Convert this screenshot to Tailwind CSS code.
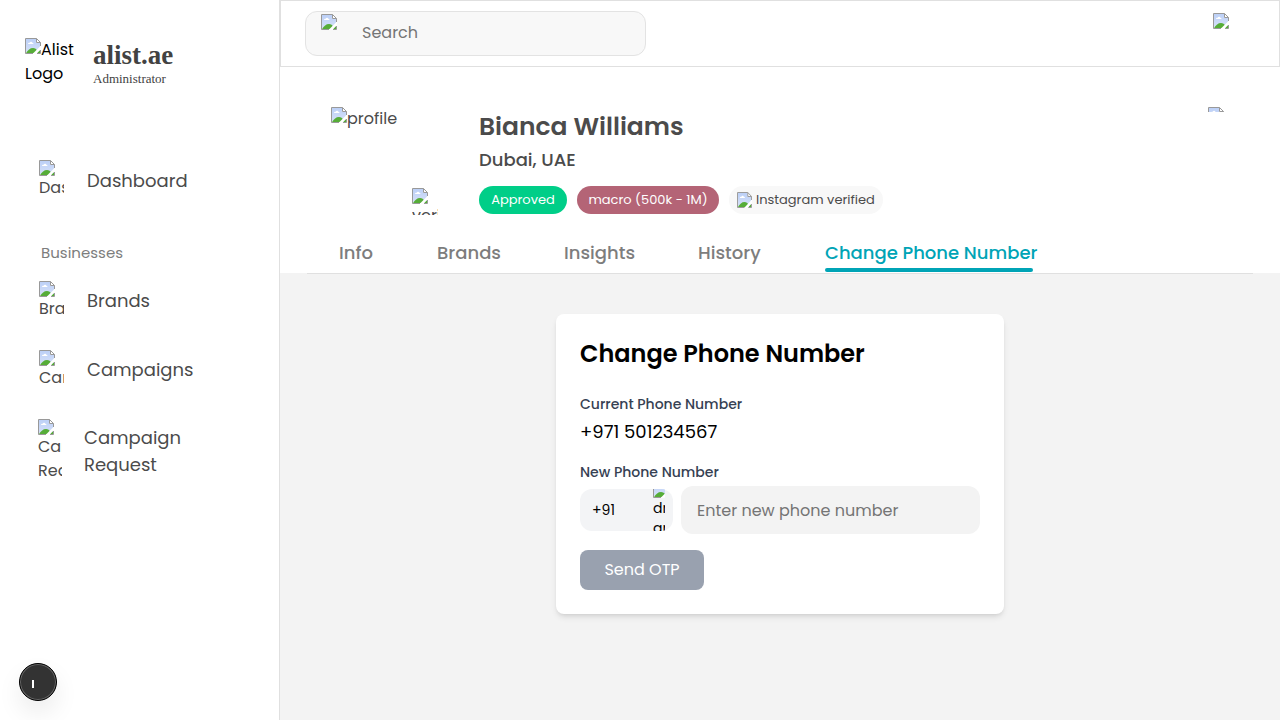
<!DOCTYPE html>
<html lang="en">
<head>
<meta charset="utf-8">
<meta name="viewport" content="width=device-width, initial-scale=1">
<title>alist.ae - Change Phone Number</title>
<script src="https://cdn.jsdelivr.net/npm/@tailwindcss/browser@4"></script>
</head>
<body class="flex min-h-screen bg-[#f3f3f3] font-[Poppins,Inter,sans-serif] text-base text-[#4b4b4b]">
<svg class="absolute size-0" aria-hidden="true">
  <linearGradient id="sky" x1="0" y1="0" x2="0" y2="1"><stop offset="0" stop-color="#bcd0f7"/><stop offset="1" stop-color="#d5e0f8"/></linearGradient>
  <symbol id="broken" viewBox="0 0 16 16">
    <path d="M.5.5h11l4 4v11H.5z" fill="#fff"/>
    <path d="M2 2h9v3h3v9H2z" fill="url(#sky)"/>
    <path d="M1 1h10v4h4v9H1z" fill="url(#sky)"/>
    <path d="M3 6c0-1 1-1.500 1.700-1.300C5 3.500 7 3.500 7.200 4.800 8.200 4.800 8.500 5.500 8.500 6z" fill="#fff"/>
    <path d="M1 15c2-3 4-5 7-5 2 0 3.500 1 4 2.500L10 15z" fill="#56ad38"/>
    <path d="M12 15l3-3v3z" fill="#56ad38"/>
    <path d="M16 7.500V11L11.500 15.500H8z" fill="#fff"/>
    <path d="M8 15.500H.5V.5h11l4 4V8M15.500 12v3.500H12M11.500.5v4h4" stroke="#999" fill="none"/>
  </symbol>
</svg>

<aside class="relative flex w-[280px] shrink-0 flex-col border-r border-[#e0e0e0] bg-white">
  <div class="flex gap-4 pt-[38px] pl-[25px]">
    <div class="w-[52px] leading-6 text-black"><svg class="inline size-4 align-top"><use href="#broken"/></svg>Alist Logo</div>
    <div class="pt-0.5 font-[Liberation_Serif,serif] text-[#424242]">
      <p class="text-[27px] leading-[30px] font-bold">alist.ae</p>
      <p class="text-[13px] leading-[18px]">Administrator</p>
    </div>
  </div>
  <nav class="flex flex-col pt-[72px] pl-[39px] text-lg">
    <a href="#" class="flex h-[42px] items-center gap-[23px]">
      <span class="flex h-[42px] w-[25px] flex-col overflow-hidden text-base leading-6"><svg class="size-4 shrink-0"><use href="#broken"/></svg><span>Dashboard</span></span>
      Dashboard
    </a>
    <h2 class="mt-10 pl-0.5 text-[15px] leading-[22px] text-[#7d7d7d]">Businesses</h2>
    <a href="#" class="mt-[17px] flex h-10 items-center gap-[23px]">
      <span class="flex h-10 w-[25px] flex-col overflow-hidden text-base leading-6"><svg class="size-4 shrink-0"><use href="#broken"/></svg><span>Brands</span></span>
      Brands
    </a>
    <a href="#" class="mt-[29px] flex h-10 items-center gap-[23px]">
      <span class="flex h-10 w-[25px] flex-col overflow-hidden text-base leading-6"><svg class="size-4 shrink-0"><use href="#broken"/></svg><span>Campaigns</span></span>
      Campaigns
    </a>
    <a href="#" class="mt-[29px] -ml-px flex items-start gap-[22px]">
      <span class="flex h-16 w-6 flex-col overflow-hidden text-base leading-6"><svg class="size-4 shrink-0"><use href="#broken"/></svg><span>Campaign Request</span></span>
      <span class="w-[110px] pt-[5px] leading-[27px]">Campaign Request</span>
    </a>
  </nav>
  <button aria-label="Open tools" class="absolute bottom-[19px] left-[19px] flex size-[38px] rounded-full border border-black bg-[#333] shadow-[0_12px_24px_rgba(0,0,0,0.08)] ring-1 ring-[#666] ring-inset">
    <span class="mt-4 ml-3 h-2 w-0.5 bg-white"></span>
  </button>
</aside>

<div class="flex min-w-0 flex-1 flex-col">
  <header class="flex h-[67px] items-start justify-between border border-[#e0e0e0] bg-white pt-2.5 pr-[50px] pl-6">
    <label class="flex h-[45px] w-[341px] items-start rounded-xl border border-[#e3e3e3] bg-[#f8f8f8] pl-[15px]">
      <svg class="mt-0.5 size-4 shrink-0"><use href="#broken"/></svg>
      <input type="search" aria-label="Search" placeholder="Search" class="ml-[25px] h-[41px] min-w-0 flex-1 bg-transparent text-base outline-none placeholder:text-[#757575]">
    </label>
    <svg class="mt-0.5 size-4"><use href="#broken"/></svg>
  </header>

  <section class="border-b border-transparent bg-white px-[27px] pt-10">
    <div class="flex items-start pr-[29px] pl-6">
      <div class="relative h-[108px] w-[148px] leading-6">
        <svg class="inline size-4 align-top"><use href="#broken"/></svg>profile
        <div class="absolute top-[81px] left-[81px] flex h-[27px] w-[26px] flex-col overflow-hidden"><svg class="size-4 shrink-0"><use href="#broken"/></svg><span>verified</span></div>
      </div>
      <div class="flex-1">
        <h1 class="text-[25px] leading-[39px] font-semibold">Bianca Williams</h1>
        <p class="text-lg leading-7 font-medium">Dubai, UAE</p>
        <div class="mt-3 flex gap-2.5 text-[13px] leading-7">
          <span class="w-[88px] rounded-full bg-[#00ce88] text-center text-white">Approved</span>
          <span class="w-[142px] rounded-full bg-[#b46476] text-center text-white">macro (500k - 1M)</span>
          <span class="flex w-[154px] items-center gap-1 rounded-full bg-[#f8f8f8] pl-2 whitespace-nowrap"><svg class="h-4 w-[15px] shrink-0" viewBox="0 0 16 16" preserveAspectRatio="none"><use href="#broken" width="16" height="16"/></svg>Instagram verified</span>
        </div>
      </div>
      <svg class="h-[5px] w-4" viewBox="0 0 16 5"><use href="#broken" width="16" height="16"/></svg>
    </div>
    <nav class="mt-6 flex gap-16 pl-8 text-lg leading-[27px] font-medium whitespace-nowrap text-[#7d7d7d]">
      <a href="#" class="w-[34px]">Info</a>
      <a href="#" class="w-[63px]">Brands</a>
      <a href="#" class="w-[70px]">Insights</a>
      <a href="#" class="w-[63px]">History</a>
      <a href="#" class="w-[208px] text-[#00a4b6]">Change Phone Number<span class="mt-0.5 block h-1 rounded-full bg-[#00a4b6]"></span></a>
    </nav>
  </section>
  <div class="mx-[27px] border-t border-[#e0e0e0]"></div>

  <main class="px-6 pt-10">
    <form class="mx-auto max-w-md rounded-lg bg-white p-6 text-black shadow-md">
      <h2 class="text-2xl font-semibold">Change Phone Number</h2>
      <p class="mt-6 text-sm font-medium text-gray-700">Current Phone Number</p>
      <p class="mt-1 text-lg">+971 501234567</p>
      <label for="phone" class="mt-4 block text-sm font-medium text-gray-700">New Phone Number</label>
      <div class="mt-1 flex items-center gap-2">
        <button type="button" class="flex h-[42px] w-[93px] items-center justify-between overflow-hidden rounded-xl bg-gray-100 pr-2 pl-3 text-sm">+91
          <span class="flex h-[42px] w-3 flex-col overflow-hidden text-left text-sm leading-5"><svg class="h-[9px] w-3 shrink-0" viewBox="0 7 12 9"><use href="#broken" width="16" height="16"/></svg><span>dr<wbr>arrow</span></span>
        </button>
        <input id="phone" type="tel" placeholder="Enter new phone number" class="h-12 min-w-0 flex-1 rounded-xl bg-[#f3f3f3] px-4 text-base outline-none placeholder:text-[#757575]">
      </div>
      <button type="button" class="mt-4 h-10 w-[124px] rounded-lg bg-[#99a1af] text-base text-white">Send OTP</button>
    </form>
  </main>
</div>
</body>
</html>
